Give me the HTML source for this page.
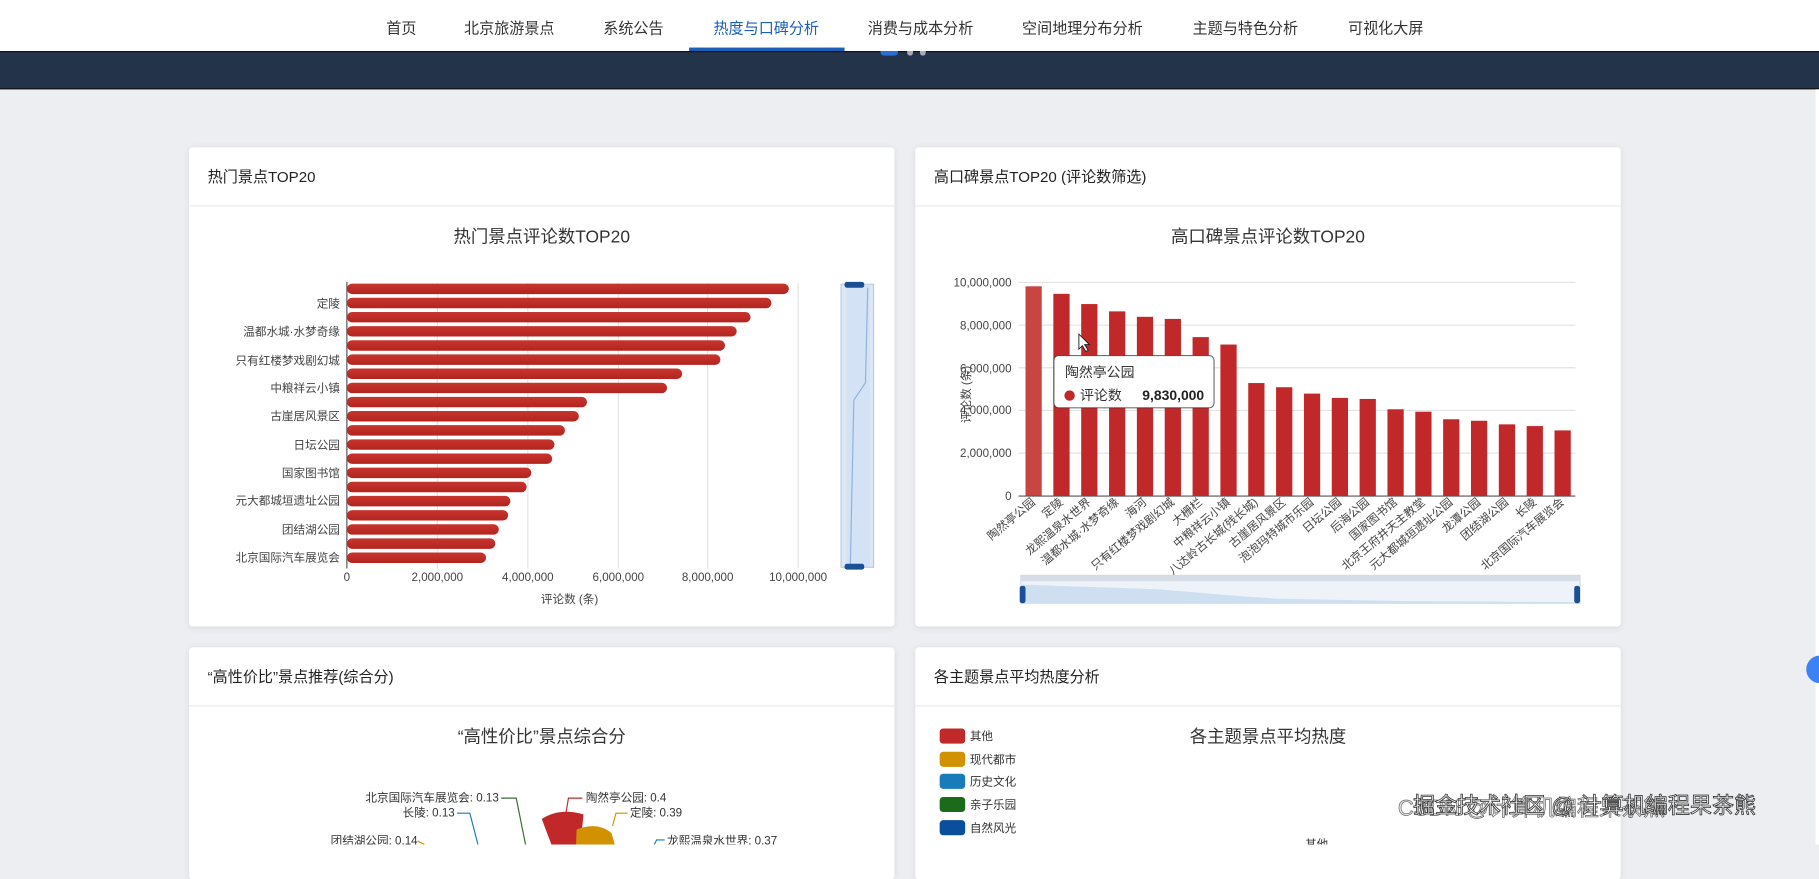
<!DOCTYPE html>
<html><head><meta charset="utf-8">
<style>
html,body{margin:0;padding:0;width:1819px;height:845px;overflow:hidden;background:#eceef2;}
#w{position:absolute;left:0;top:0;width:1568px;height:728px;transform:scale(1.16008);transform-origin:0 0;font-family:"Liberation Sans","Noto Sans CJK SC",sans-serif;color:#333;}
.nav{position:absolute;left:0;top:0;width:1568px;height:44px;background:#fff;}
.nav span{position:absolute;top:14px;font-size:13px;color:#333;}
.band{position:absolute;left:0;top:44px;width:1568px;height:33px;background:#22334a;border-top:1px solid #111;border-bottom:1px solid #111;box-sizing:border-box}
.card{position:absolute;background:#fff;border-radius:3px;box-shadow:0 1px 6px rgba(0,0,0,.08);overflow:hidden}
.card .h{height:50px;border-bottom:1px solid #e8e8e8;font-size:13px;line-height:52px;padding-left:16px;color:#222}
svg text{font-family:"Liberation Sans","Noto Sans CJK SC",sans-serif}
</style></head><body><div id="w">
<div class="nav">
<span style="left:333px">首页</span>
<span style="left:400px">北京旅游景点</span>
<span style="left:520px">系统公告</span>
<span style="left:615px;color:#1d5fb6">热度与口碑分析</span>
<span style="left:748px">消费与成本分析</span>
<span style="left:881px">空间地理分布分析</span>
<span style="left:1028px">主题与特色分析</span>
<span style="left:1162px">可视化大屏</span>
<div style="position:absolute;left:594px;top:41px;width:134px;height:3px;background:#1d5fb6"></div>
</div>
<div class="band"></div>
<div style="position:absolute;left:759px;top:44px;width:15px;height:4px;background:#2a6fd6;border-radius:0 0 3px 3px"></div>
<div style="position:absolute;left:782px;top:44px;width:5px;height:4px;background:#aab;border-radius:0 0 3px 3px"></div>
<div style="position:absolute;left:793px;top:44px;width:5px;height:4px;background:#aab;border-radius:0 0 3px 3px"></div>
<div style="position:absolute;left:1565px;top:77px;width:3px;height:651px;background:#fff"></div>

<div class="card" style="left:163px;top:127px;width:608px;height:413px"><div class="h">热门景点TOP20</div></div>
<div class="card" style="left:789px;top:127px;width:608px;height:413px"><div class="h">高口碑景点TOP20 (评论数筛选)</div></div>
<div class="card" style="left:163px;top:558px;width:608px;height:200px"><div class="h">“高性价比”景点推荐(综合分)</div></div>
<div class="card" style="left:789px;top:558px;width:608px;height:200px"><div class="h">各主题景点平均热度分析</div></div>
<div style="position:absolute;left:1557px;top:565px;width:24px;height:24px;border-radius:12px;background:#3b82f6"></div>

<svg width="1568" height="728" style="position:absolute;left:0;top:0">
<defs><linearGradient id="g" x1="0" y1="0" x2="0" y2="1"><stop offset="0" stop-color="#c8352e"/><stop offset="1" stop-color="#b3241f"/></linearGradient></defs>
<!-- left chart -->
<text x="467" y="209" font-size="15" text-anchor="middle" fill="#333">热门景点评论数TOP20</text>
<g stroke="#e3e3e3" stroke-width="1">
<line x1="377" y1="244" x2="377" y2="490"/><line x1="455" y1="244" x2="455" y2="490"/><line x1="533" y1="244" x2="533" y2="490"/><line x1="610" y1="244" x2="610" y2="490"/><line x1="688" y1="244" x2="688" y2="490"/></g>
<g fill="url(#g)">
<rect x="299" y="244.5" width="381" height="9" rx="4.5"/>
<rect x="299" y="256.7" width="366" height="9" rx="4.5"/>
<rect x="299" y="268.9" width="348" height="9" rx="4.5"/>
<rect x="299" y="281.1" width="336" height="9" rx="4.5"/>
<rect x="299" y="293.3" width="326" height="9" rx="4.5"/>
<rect x="299" y="305.5" width="322" height="9" rx="4.5"/>
<rect x="299" y="317.7" width="289" height="9" rx="4.5"/>
<rect x="299" y="329.9" width="276" height="9" rx="4.5"/>
<rect x="299" y="342.1" width="207" height="9" rx="4.5"/>
<rect x="299" y="354.3" width="200" height="9" rx="4.5"/>
<rect x="299" y="366.5" width="188" height="9" rx="4.5"/>
<rect x="299" y="378.7" width="179" height="9" rx="4.5"/>
<rect x="299" y="390.9" width="177" height="9" rx="4.5"/>
<rect x="299" y="403.1" width="159" height="9" rx="4.5"/>
<rect x="299" y="415.3" width="155" height="9" rx="4.5"/>
<rect x="299" y="427.5" width="141" height="9" rx="4.5"/>
<rect x="299" y="439.7" width="139" height="9" rx="4.5"/>
<rect x="299" y="451.9" width="131" height="9" rx="4.5"/>
<rect x="299" y="464.1" width="128" height="9" rx="4.5"/>
<rect x="299" y="476.3" width="120" height="9" rx="4.5"/>
</g>
<line x1="299" y1="243" x2="299" y2="490" stroke="#555"/>
<g font-size="10" fill="#444" text-anchor="end">
<text x="293" y="265">定陵</text><text x="293" y="289">温都水城·水梦奇缘</text><text x="293" y="314">只有红楼梦戏剧幻城</text><text x="293" y="338">中粮祥云小镇</text><text x="293" y="362">古崖居风景区</text><text x="293" y="387">日坛公园</text><text x="293" y="411">国家图书馆</text><text x="293" y="435">元大都城垣遗址公园</text><text x="293" y="460">团结湖公园</text><text x="293" y="484">北京国际汽车展览会</text></g>
<g font-size="10" fill="#444" text-anchor="middle"><text x="299" y="501">0</text><text x="377" y="501">2,000,000</text><text x="455" y="501">4,000,000</text><text x="533" y="501">6,000,000</text><text x="610" y="501">8,000,000</text><text x="688" y="501">10,000,000</text><text x="491" y="520">评论数 (条)</text></g>
<rect x="725" y="245" width="28" height="244" fill="#dde8f5" stroke="#b9cbe2"/>
<rect x="730" y="245" width="20" height="244" fill="#cfe0f3" opacity=".7"/>
<path d="M748 248 L746 330 L736 345 L733 488" stroke="#8fb2dd" fill="none"/>
<rect x="728" y="243" width="17" height="5" rx="2" fill="#1b4f96"/><rect x="728" y="486" width="17" height="5" rx="2" fill="#1b4f96"/>

<!-- right chart -->
<text x="1093" y="209" font-size="15" text-anchor="middle" fill="#333">高口碑景点评论数TOP20</text>
<g stroke="#e3e3e3"><line x1="878" y1="243.5" x2="1358" y2="243.5"/><line x1="878" y1="280.3" x2="1358" y2="280.3"/><line x1="878" y1="317" x2="1358" y2="317"/><line x1="878" y1="353.8" x2="1358" y2="353.8"/><line x1="878" y1="390.6" x2="1358" y2="390.6"/></g>
<g font-size="10" fill="#444" text-anchor="end"><text x="872" y="247">10,000,000</text><text x="872" y="284">8,000,000</text><text x="872" y="321">6,000,000</text><text x="872" y="357">4,000,000</text><text x="872" y="394">2,000,000</text><text x="872" y="431">0</text></g>
<text transform="translate(836,340) rotate(-90)" font-size="10" fill="#444" text-anchor="middle">评论数 (条)</text>
<g fill="#c0282a">
<rect x="884" y="246.8" width="14" height="180.8" fill="#c94542"/>
<rect x="908" y="253.3" width="14" height="174.3"/>
<rect x="932" y="262.1" width="14" height="165.5"/>
<rect x="956" y="268.4" width="14" height="159.2"/>
<rect x="980" y="273.1" width="14" height="154.5"/>
<rect x="1004" y="274.9" width="14" height="152.7"/>
<rect x="1028" y="290.6" width="14" height="137"/>
<rect x="1052" y="297" width="14" height="130.6"/>
<rect x="1076" y="330.2" width="14" height="97.4"/>
<rect x="1100" y="333.8" width="14" height="93.8"/>
<rect x="1124" y="339.3" width="14" height="88.3"/>
<rect x="1148" y="343" width="14" height="84.6"/>
<rect x="1172" y="343.9" width="14" height="83.7"/>
<rect x="1196" y="352.8" width="14" height="74.8"/>
<rect x="1220" y="354.9" width="14" height="72.7"/>
<rect x="1244" y="361.4" width="14" height="66.2"/>
<rect x="1268" y="362.7" width="14" height="64.9"/>
<rect x="1292" y="365.8" width="14" height="61.8"/>
<rect x="1316" y="367.3" width="14" height="60.3"/>
<rect x="1340" y="371" width="14" height="56.6"/>
</g>
<line x1="878" y1="427.6" x2="1358" y2="427.6" stroke="#555"/>
<g font-size="10" fill="#444" text-anchor="end">
<text transform="translate(893,434) rotate(-40)">陶然亭公园</text>
<text transform="translate(917,434) rotate(-40)">定陵</text>
<text transform="translate(941,434) rotate(-40)">龙熙温泉水世界</text>
<text transform="translate(965,434) rotate(-40)">温都水城·水梦奇缘</text>
<text transform="translate(989,434) rotate(-40)">海河</text>
<text transform="translate(1013,434) rotate(-40)">只有红楼梦戏剧幻城</text>
<text transform="translate(1037,434) rotate(-40)">大栅栏</text>
<text transform="translate(1061,434) rotate(-40)">中粮祥云小镇</text>
<text transform="translate(1085,434) rotate(-40)">八达岭古长城(残长城)</text>
<text transform="translate(1109,434) rotate(-40)">古崖居风景区</text>
<text transform="translate(1133,434) rotate(-40)">泡泡玛特城市乐园</text>
<text transform="translate(1157,434) rotate(-40)">日坛公园</text>
<text transform="translate(1181,434) rotate(-40)">后海公园</text>
<text transform="translate(1205,434) rotate(-40)">国家图书馆</text>
<text transform="translate(1229,434) rotate(-40)">北京王府井天主教堂</text>
<text transform="translate(1253,434) rotate(-40)">元大都城垣遗址公园</text>
<text transform="translate(1277,434) rotate(-40)">龙潭公园</text>
<text transform="translate(1301,434) rotate(-40)">团结湖公园</text>
<text transform="translate(1325,434) rotate(-40)">长陵</text>
<text transform="translate(1349,434) rotate(-40)">北京国际汽车展览会</text>
</g>
<rect x="880" y="496" width="482" height="24" fill="#eef3fa" stroke="#d0d9e6"/>
<rect x="880" y="496" width="482" height="5" fill="#d7dde6"/>
<path d="M881 504 L1000 508 L1070 514 L1100 516 L1200 518 L1360 519 L1360 520 L881 520Z" fill="#cfdff2"/>
<rect x="879" y="505" width="5" height="15" rx="2" fill="#1b4f96"/><rect x="1357" y="505" width="5" height="15" rx="2" fill="#1b4f96"/>
<!-- tooltip -->
<rect x="908.5" y="306.5" width="138" height="45" rx="4" fill="#fff" stroke="#333" stroke-opacity=".7"/>
<text x="918" y="325" font-size="12" fill="#333">陶然亭公园</text>
<circle cx="922" cy="341" r="4.5" fill="#c0282a"/>
<text x="931" y="345" font-size="12" fill="#333">评论数</text>
<text x="1038" y="345" font-size="12" font-weight="bold" fill="#222" text-anchor="end">9,830,000</text>
<path d="M930 288 L930 301 L933 298 L936 303 L938 302 L935 297 L939 297Z" fill="#fff" stroke="#222" stroke-width=".8"/>

<!-- bottom left -->
<text x="467" y="640" font-size="15" text-anchor="middle" fill="#333">“高性价比”景点综合分</text>
<path d="M495 780 L467 706 Q482 696 503 702 Z" fill="#c0282a"/>
<path d="M495 780 L497 715 Q515 708 527 718 L530 728 Z" fill="#d29100"/>
<g font-size="10" fill="#333">
<text x="315" y="691">北京国际汽车展览会: 0.13</text><text x="347" y="704">长陵: 0.13</text><text x="285" y="728">团结湖公园: 0.14</text>
<text x="505" y="691">陶然亭公园: 0.4</text><text x="543" y="704">定陵: 0.39</text><text x="575" y="728">龙熙温泉水世界: 0.37</text></g>
<g fill="none" stroke-width="1">
<path d="M432 688 L445 688 L453 728" stroke="#3a6b35"/>
<path d="M394 701 L405 701 L412 728" stroke="#1a7bb9"/>
<path d="M360 725 L366 728" stroke="#d29100"/>
<path d="M502 688 L490 688 L488 700" stroke="#c0282a"/>
<path d="M541 701 L531 701 L528 712" stroke="#d29100"/>
<path d="M573 724 L566 724 L564 728" stroke="#1a7bb9"/></g>
<!-- bottom right -->
<text x="1093" y="640" font-size="15" text-anchor="middle" fill="#333">各主题景点平均热度</text>
<g font-size="10" fill="#333">
<rect x="810" y="628" width="22" height="13" rx="3" fill="#c0282a"/><text x="836" y="638">其他</text>
<rect x="810" y="648" width="22" height="13" rx="3" fill="#d29100"/><text x="836" y="658">现代都市</text>
<rect x="810" y="667" width="22" height="13" rx="3" fill="#1a7bb9"/><text x="836" y="677">历史文化</text>
<rect x="810" y="687" width="22" height="13" rx="3" fill="#1b6b1b"/><text x="836" y="697">亲子乐园</text>
<rect x="810" y="707" width="22" height="13" rx="3" fill="#0b4f9c"/><text x="836" y="717">自然风光</text>
<text x="1125" y="731">其他</text></g>
<text x="1205" y="703" font-size="19" fill="#e8e8e8" stroke="#666" stroke-width=".6">CSDN @计算机编程果茶熊</text>
<text x="1218" y="701" font-size="19" fill="#fff" stroke="#333" stroke-width=".7">掘金技术社区 @ 计算机编程果茶熊</text>
</svg>
</div></body></html>
